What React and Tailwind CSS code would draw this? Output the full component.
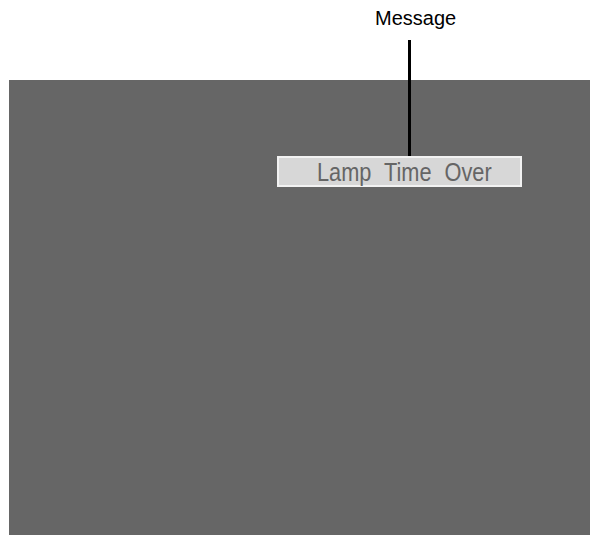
export default function App() {
  return (
    <div
      className="relative w-[590px] h-[535px] bg-white overflow-hidden"
      style={{ fontFamily: '"Liberation Sans", Arial, sans-serif' }}
    >
      <div className="h-[80px] pt-[7px] pl-[375px]">
        <div className="text-[20px] leading-[23px] text-black">Message</div>
      </div>
      <div className="ml-[9px] h-[455px] bg-[#666666] pt-[76px] pl-[268px]">
        <div className="w-[245px] h-[31px] border-2 border-[#f2f2f2] bg-[#d7d7d7] pt-[2px]">
          <div
            className="ml-[38px] inline-block origin-left scale-x-[0.87] whitespace-nowrap text-[25px] leading-[25px] text-[#656565]"
            style={{ wordSpacing: '8px' }}
          >
            Lamp Time Over
          </div>
        </div>
      </div>
      <div className="absolute left-[408px] top-[40px] w-[3px] h-[116px] bg-black" />
    </div>
  );
}
